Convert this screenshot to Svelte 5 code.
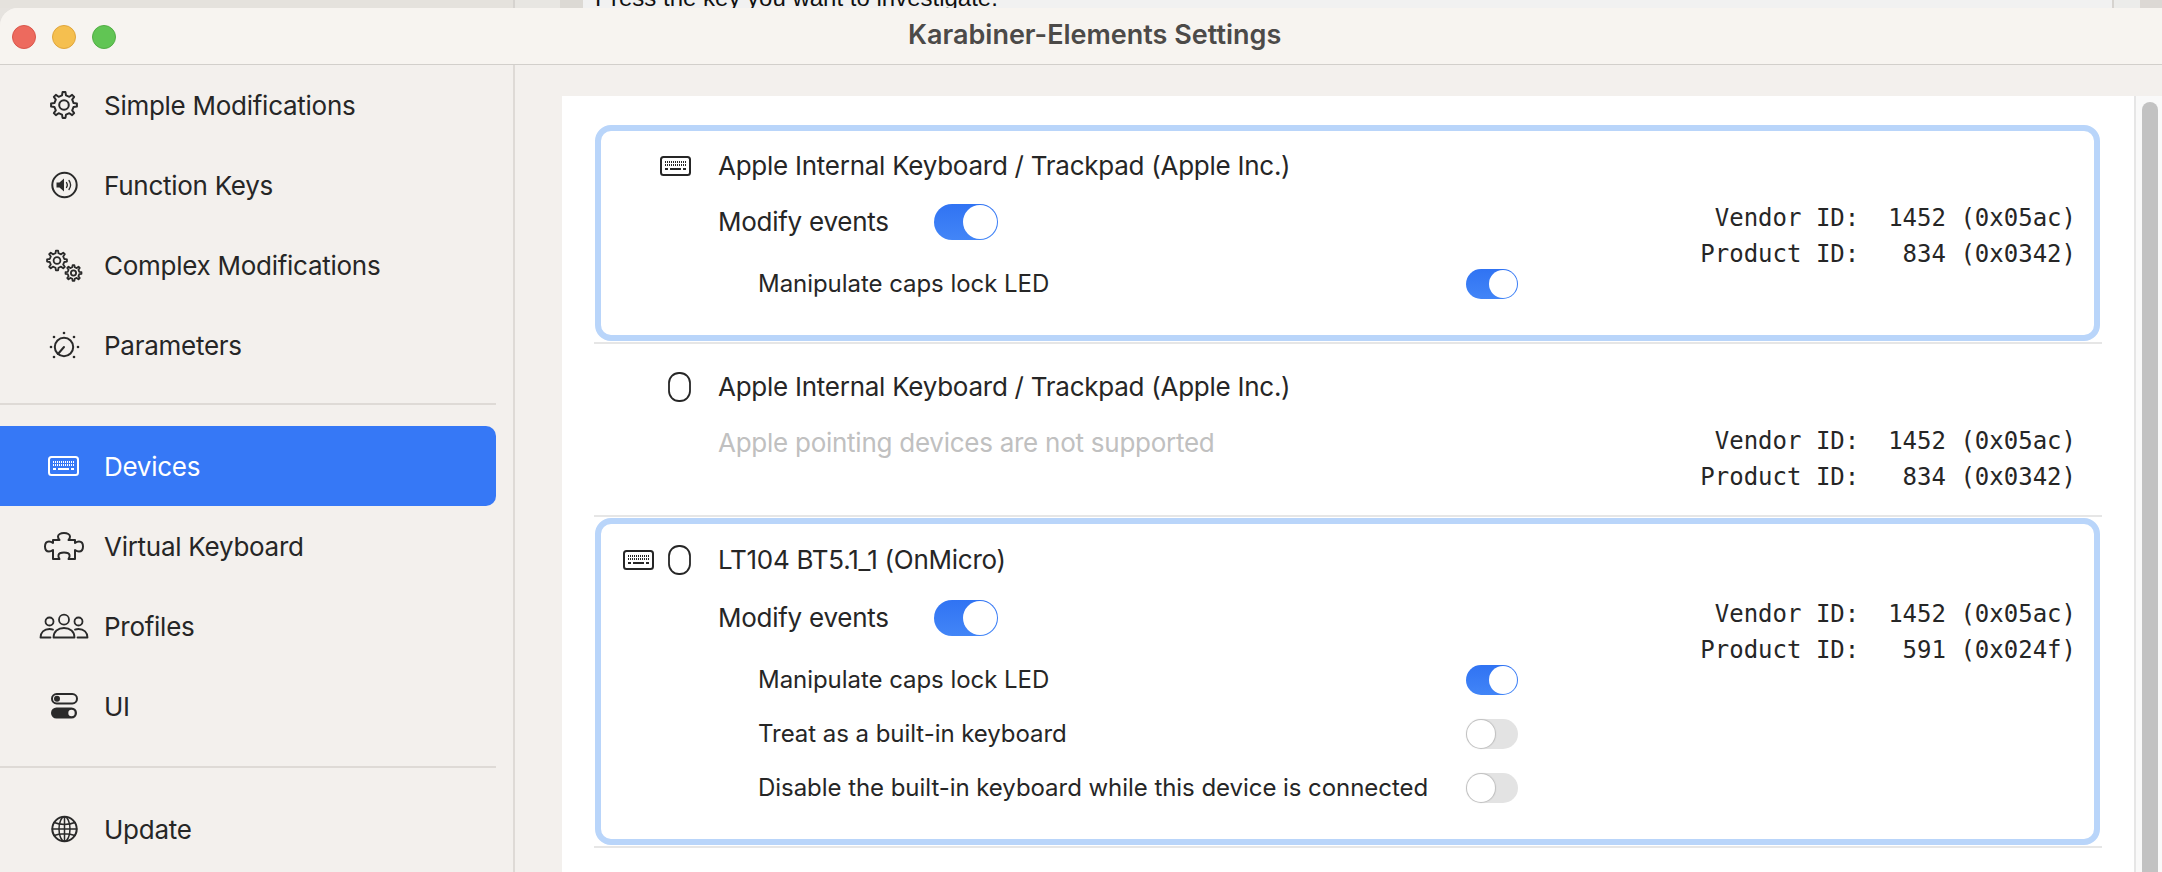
<script>
  const navTop = [
    { label: "Simple Modifications", icon: "gear" },
    { label: "Function Keys", icon: "sound" },
    { label: "Complex Modifications", icon: "gears" },
    { label: "Parameters", icon: "dial" },
  ];
  const navMid = [
    { label: "Devices", icon: "keyboard", active: true },
    { label: "Virtual Keyboard", icon: "puzzle" },
    { label: "Profiles", icon: "people" },
    { label: "UI", icon: "switches" },
  ];
  const navBottom = [{ label: "Update", icon: "globe" }];

  const devices = [
    {
      name: "Apple Internal Keyboard / Trackpad (Apple Inc.)",
      keyboard: true,
      card: true,
      modify: true,
      product: "  834 (0x0342)",
      options: [{ label: "Manipulate caps lock LED", on: true }],
    },
    {
      name: "Apple Internal Keyboard / Trackpad (Apple Inc.)",
      mouse: true,
      note: "Apple pointing devices are not supported",
      product: "  834 (0x0342)",
      options: [],
    },
    {
      name: "LT104 BT5.1_1 (OnMicro)",
      keyboard: true,
      mouse: true,
      card: true,
      modify: true,
      product: "  591 (0x024f)",
      options: [
        { label: "Manipulate caps lock LED", on: true },
        { label: "Treat as a built-in keyboard", on: false },
        { label: "Disable the built-in keyboard while this device is connected", on: false },
      ],
    },
  ];

  // cog outline with n teeth, used by the gear icons
  function cog(cx, cy, outer, inner, n) {
    const pts = [];
    const step = (Math.PI * 2) / n;
    for (let i = 0; i < n; i++) {
      const a = i * step - Math.PI / 2;
      const w = step * 0.2;
      const list = [
        [a - w * 1.3, inner],
        [a - w * 0.7, outer],
        [a + w * 0.7, outer],
        [a + w * 1.3, inner],
      ];
      for (const [ang, r] of list) {
        pts.push((cx + Math.cos(ang) * r).toFixed(2) + " " + (cy + Math.sin(ang) * r).toFixed(2));
      }
    }
    return "M" + pts.join("L") + "Z";
  }

  const keyRows = [5, 8];
  const keyCols = [5, 7, 9, 11, 13, 15, 17, 19, 21, 23, 25];
</script>

{#snippet keyboardGlyph(x, y)}
  <g transform="translate({x} {y})">
    <rect x="1" y="1" width="29" height="18" rx="2.5" fill="none" stroke="currentColor" stroke-width="2" />
    {#each keyRows as ky}
      {#each keyCols as kx}
        <rect x={kx} y={ky} width="1" height="2" fill="currentColor" stroke="none" />
      {/each}
    {/each}
    <rect x="5" y="12" width="3" height="2" fill="currentColor" stroke="none" />
    <rect x="10" y="12" width="11" height="2" fill="currentColor" stroke="none" />
    <rect x="23" y="12" width="3" height="2" fill="currentColor" stroke="none" />
  </g>
{/snippet}

{#snippet navIcon(name)}
  <svg class="nav-icon" viewBox="0 0 54 40" width="54" height="40" fill="none" stroke="currentColor" stroke-width="2" stroke-linejoin="round" stroke-linecap="round">
    {#if name === "gear"}
      <path d={cog(27, 20, 13, 9.8, 8)} />
      <circle cx="27" cy="20" r="4.8" />
    {:else if name === "sound"}
      <circle cx="27.5" cy="20" r="12.2" />
      <path d="M19.5 17.5h3l4.5-4v13l-4.5-4h-3z" fill="currentColor" stroke="none" />
      <path d="M29.5 17.5c1 1.5 1 3.5 0 5M32 15.5c2 2.8 2 6.2 0 9" stroke-width="1.3" />
    {:else if name === "gears"}
      <path d={cog(20, 15.5, 10, 7.4, 8)} stroke-width="1.8" />
      <circle cx="20" cy="15.5" r="3.4" stroke-width="1.8" />
      <path d={cog(36.5, 28, 8, 5.9, 8)} stroke-width="1.8" />
      <circle cx="36.5" cy="28" r="2.6" stroke-width="1.8" />
    {:else if name === "dial"}
      <circle cx="27" cy="22" r="9.2" />
      <path d="M27 22l-6 7" />
      {#each [[27, 8], [17, 12], [37, 12], [14, 22], [41, 22], [17, 32], [37, 32]] as d}
        <circle cx={d[0]} cy={d[1]} r="1.3" fill="currentColor" stroke="none" />
      {/each}
    {:else if name === "keyboard"}
      {@render keyboardGlyph(11, 10)}
    {:else if name === "puzzle"}
      <path d="M16 14H22.5C22.5 14 21 12.5 21 10.5C21 8.5 23.5 7 27 7C30.5 7 33 8.5 33 10.5C33 12.5 31.5 14 31.5 14H38V17C38 17 40 15.5 42 15.5C44.5 15.5 46 17.5 46 20.5C46 23.5 44.5 25.5 42 25.5C40 25.5 38 24 38 24V33H31.5C31.5 33 33 31 32.5 29C32 27 30 26.5 27 26.5C24 26.5 22 27 21.5 29C21 31 22.5 33 22.5 33H16V24C16 24 14 25.5 12 25.5C9.5 25.5 8 23.5 8 20.5C8 17.5 9.5 15.5 12 15.5C14 15.5 16 17 16 17Z" />
    {:else if name === "people"}
      <circle cx="27" cy="13.7" r="5" stroke-width="1.8" />
      <path d="M16.5 31.5c0-6 4.5-9.5 10.5-9.5s10.5 3.5 10.5 9.5z" stroke-width="1.8" />
      <circle cx="12.5" cy="15.5" r="4" stroke-width="1.8" />
      <circle cx="41.5" cy="15.5" r="4" stroke-width="1.8" />
      <path d="M13.5 31.5H3.5c0-5 3.5-8.5 9-8.5 1.5 0 2.5.2 3.5.6M40.5 31.5h10c0-5-3.5-8.5-9-8.5-1.5 0-2.5.2-3.5.6" stroke-width="1.8" />
    {:else if name === "switches"}
      <rect x="15" y="8" width="25" height="9.5" rx="4.7" />
      <circle cx="20" cy="12.7" r="3" fill="currentColor" stroke="none" />
      <rect x="14" y="21.5" width="26" height="11" rx="5.5" fill="currentColor" stroke="none" />
      <circle cx="34.5" cy="27" r="3.2" fill="#f3f0ed" stroke="none" />
    {:else if name === "globe"}
      <circle cx="27.5" cy="20" r="12.2" />
      <ellipse cx="27.5" cy="20" rx="5.5" ry="12.2" stroke-width="1.5" />
      <path d="M27.5 8v24M15.3 20h24.4M17 13.5c6 2.5 15 2.5 21 0M17 26.5c6-2.5 15-2.5 21 0" stroke-width="1.5" />
    {/if}
  </svg>
{/snippet}

{#snippet navItem(item)}
  <div class="nav-item" class:active={item.active}>
    {@render navIcon(item.icon)}
    <span>{item.label}</span>
  </div>
{/snippet}

<div class="screen">
  <div class="backdrop">
    <div class="bd-a"></div>
    <div class="bd-b"></div>
    <div class="bd-c"></div>
    <div class="bd-text"><span>Press the key you want to investigate.</span></div>
    <div class="bd-d"></div>
    <div class="bd-e"></div>
  </div>

  <div class="window">
    <header class="titlebar">
      <div class="lights">
        <span class="light red"></span>
        <span class="light yellow"></span>
        <span class="light green"></span>
      </div>
      <div class="title">Karabiner-Elements Settings</div>
    </header>

    <div class="body">
      <aside class="sidebar">
        {#each navTop as item}
          {@render navItem(item)}
        {/each}
        <div class="nav-sep first"></div>
        {#each navMid as item}
          {@render navItem(item)}
        {/each}
        <div class="nav-sep second"></div>
        {#each navBottom as item}
          {@render navItem(item)}
        {/each}
      </aside>

      <main class="main">
        <section class="panel">
          {#each devices as d, i}
            {#if i > 0}<div class="rule"></div>{/if}
            <div class="device" class:card={d.card} class:plain={!d.card}>
              <div class="dev-icons">
                {#if d.keyboard}
                  <svg class="dev-kb" viewBox="0 0 31 20" width="31" height="20">
                    {@render keyboardGlyph(0, 0)}
                  </svg>
                {/if}
                {#if d.mouse}
                  <svg viewBox="0 0 23 32" width="23" height="32" fill="none" stroke="currentColor" stroke-width="1.8">
                    <rect x="1" y="2" width="21" height="28" rx="10" />
                  </svg>
                {/if}
              </div>
              <div class="dev-name"><span>{d.name}</span></div>
              <div class="dev-settings">
                {#if d.note}
                  <div class="note">{d.note}</div>
                {/if}
                {#if d.modify}
                  <div class="modify">
                    <span class="modify-label">Modify events</span>
                    <span class="toggle big on"><span class="thumb"></span></span>
                  </div>
                {/if}
                {#if d.options.length}
                  <div class="options">
                    {#each d.options as opt}
                      <div class="option">
                        <span class="option-label">{opt.label}</span>
                        <span class="toggle" class:on={opt.on}><span class="thumb"></span></span>
                      </div>
                    {/each}
                  </div>
                {/if}
              </div>
              <div class="ids">
                <div class="id-line">Vendor ID:  1452 (0x05ac)</div>
                <div class="id-line">Product ID: {d.product}</div>
              </div>
            </div>
          {/each}
          <div class="rule"></div>
        </section>
        <div class="scrollbar"><div class="scroll-thumb"></div></div>
      </main>
    </div>
  </div>
</div>

<style>
  :global(body) {
    margin: 0;
    background: #e6e3df;
    overflow: hidden;
  }

  .screen {
    width: 2162px;
    height: 872px;
    overflow: hidden;
    display: flex;
    flex-direction: column;
    font-family: Inter, "Noto Sans", sans-serif;
    color: #262626;
  }

  /* the other windows peeking out above this one */
  .backdrop {
    height: 8px;
    flex-shrink: 0;
    display: flex;
    overflow: hidden;
  }
  .bd-a {
    width: 513px;
    background: #e5e2dd;
    border-right: 2px solid #d6d3cf;
  }
  .bd-b {
    width: 45px;
    background: #e8e6e2;
  }
  .bd-c {
    width: 23px;
    background: #dcd9d4;
  }
  .bd-text {
    width: 1531px;
    height: 8px;
    box-sizing: border-box;
    padding-left: 12px;
    overflow: hidden;
    background: #f1f1f1;
    border-right: 2px solid #d6d3cf;
    font-family: "Liberation Sans", sans-serif;
    font-size: 24px;
    line-height: 30px;
    color: #111;
    white-space: nowrap;
  }
  .bd-text span {
    display: block;
    margin-top: -17px;
  }
  .bd-d {
    width: 26px;
    background: #ececea;
  }
  .bd-e {
    flex: 1;
    background: #dcd8d4;
  }

  .window {
    flex: 1;
    min-height: 0;
    display: flex;
    flex-direction: column;
    background: #f3f0ed;
    border-top-left-radius: 18px;
    overflow: hidden;
  }

  .titlebar {
    height: 57px;
    flex-shrink: 0;
    box-sizing: border-box;
    display: flex;
    align-items: center;
    padding-left: 12px;
    background: #f7f4f0;
    border-bottom: 1px solid #d2cfcb;
  }
  .lights {
    display: flex;
    gap: 16px;
  }
  .light {
    width: 24px;
    height: 24px;
    border-radius: 50%;
    box-sizing: border-box;
    margin-top: 1px;
  }
  .red {
    background: #ed6a5e;
    border: 1px solid #d9564b;
  }
  .yellow {
    background: #f5bf4f;
    border: 1px solid #dfa53c;
  }
  .green {
    background: #61c554;
    border: 1px solid #52ad45;
  }
  .title {
    margin-left: 792px;
    margin-top: -3px;
    font-size: 27px;
    font-weight: 600;
    color: #4c4a48;
    white-space: nowrap;
  }

  .body {
    flex: 1;
    min-height: 0;
    display: flex;
  }

  .sidebar {
    width: 515px;
    flex-shrink: 0;
    box-sizing: border-box;
    padding-right: 17px;
    border-right: 2px solid #dedad6;
  }
  .nav-item {
    height: 80px;
    display: flex;
    align-items: center;
    gap: 13px;
    padding-left: 37px;
    font-size: 26px;
    letter-spacing: -0.27px;
    color: #262626;
    border-radius: 0 10px 10px 0;
  }
  .nav-item.active {
    background: #3678f6;
    color: #fff;
  }
  .nav-icon {
    flex-shrink: 0;
    color: #2a2a2a;
  }
  .active .nav-icon {
    color: #fff;
  }
  .nav-sep {
    height: 2px;
    background: #dedad6;
  }
  .nav-sep.first {
    margin: 18px 0 21px;
  }
  .nav-sep.second {
    margin: 20px 0 21px;
  }

  .main {
    flex: 1;
    min-width: 0;
    display: flex;
    padding: 31px 0 0 47px;
  }

  .panel {
    flex: 1;
    min-width: 0;
    background: #fff;
    padding: 28px 32px 0;
    display: flex;
    flex-direction: column;
  }

  .scrollbar {
    width: 28px;
    flex-shrink: 0;
    box-sizing: border-box;
    background: #f9f9f9;
    border-left: 2px solid #e6e6e6;
    padding: 6px 4px 0 6px;
  }
  .scroll-thumb {
    height: 100%;
    background: #c2c2c2;
    border-radius: 8px 8px 0 0;
  }

  .rule {
    height: 2px;
    background: #e6e6e6;
    flex-shrink: 0;
  }

  .device {
    display: grid;
    grid-template-columns: 90px 1fr auto;
    grid-template-rows: auto auto;
    column-gap: 27px;
    margin: 0 2px 0 1px;
    border: 6px solid transparent;
    border-radius: 16px;
    padding: 20px 18px 24px 0;
  }
  .device.card {
    border-color: #b9d5fa;
    margin-top: 1px;
    margin-bottom: 1px;
  }
  .device.plain {
    padding-top: 21px;
    padding-bottom: 14px;
  }

  .dev-icons {
    display: flex;
    align-items: center;
    justify-content: flex-end;
    gap: 14px;
    color: #262626;
  }
  .dev-name {
    min-height: 29px;
    display: flex;
    align-items: center;
    font-size: 26px;
    letter-spacing: -0.26px;
    white-space: nowrap;
  }
  .dev-name span {
    line-height: 26px;
  }
  .dev-settings {
    grid-column: 2;
    grid-row: 2;
  }
  .note {
    margin-top: 22px;
    height: 36px;
    line-height: 36px;
    font-size: 26px;
    letter-spacing: -0.26px;
    color: #c0c0c0;
  }
  .modify {
    margin-top: 24px;
    display: flex;
    align-items: center;
    font-size: 26px;
    letter-spacing: -0.26px;
  }
  .modify-label {
    width: 216px;
    padding-bottom: 2px;
  }
  .options {
    margin-top: 17px;
    padding-left: 40px;
  }
  .option {
    height: 54px;
    display: flex;
    align-items: center;
    font-size: 24px;
    letter-spacing: -0.05px;
  }
  .option-label {
    width: 708px;
    flex-shrink: 0;
    white-space: nowrap;
    margin-top: -2px;
  }

  .toggle {
    display: flex;
    box-sizing: border-box;
    width: 52px;
    height: 30px;
    padding: 1px;
    border-radius: 15px;
    background: #e3e3e3;
    flex-shrink: 0;
  }
  .toggle.on {
    background: linear-gradient(180deg, #3073f3, #4285f7);
    justify-content: flex-end;
  }
  .toggle.big {
    width: 64px;
    height: 36px;
    border-radius: 18px;
  }
  .thumb {
    width: 28px;
    height: 28px;
    box-sizing: border-box;
    border-radius: 50%;
    background: #fff;
    box-shadow: 0 0 1px 1px rgba(120, 120, 120, 0.35);
  }
  .on .thumb {
    box-shadow: none;
  }
  .big .thumb {
    width: 34px;
    height: 34px;
  }

  .ids {
    grid-column: 3;
    grid-row: 2;
    margin-top: 20px;
    font-family: "DejaVu Sans Mono", "Liberation Mono", monospace;
    font-size: 24px;
    line-height: 36px;
    text-align: right;
    color: #262626;
  }
  .id-line {
    white-space: pre;
  }
</style>
